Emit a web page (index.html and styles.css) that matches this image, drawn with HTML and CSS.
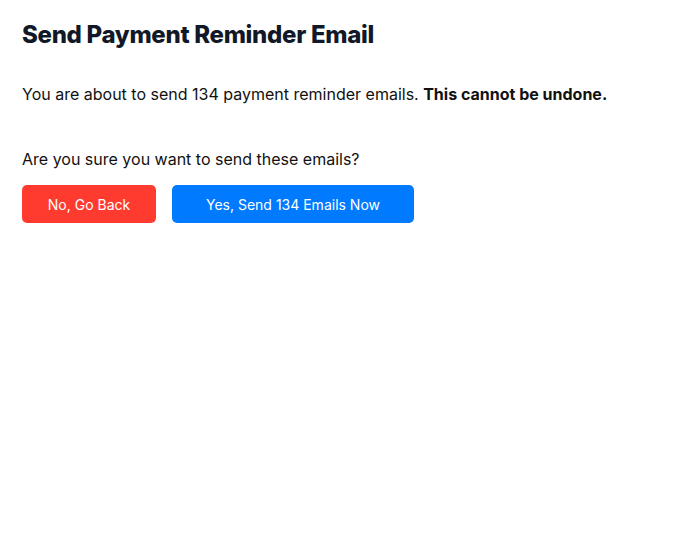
FILE: index.html
```html
<!DOCTYPE html>
<html>
<head>
<meta charset="utf-8">
<link rel="stylesheet" href="styles.css">
</head>
<body>
<main class="dialog">
  <h1 class="title">Send Payment Reminder Email</h1>
  <p class="message">You are about to send 134 payment reminder emails. <strong>This cannot be undone.</strong></p>
  <p class="question">Are you sure you want to send these emails?</p>
  <div class="actions">
    <button class="btn btn-cancel">No, Go Back</button>
    <button class="btn btn-confirm">Yes, Send 134 Emails Now</button>
  </div>
</main>
</body>
</html>
```

FILE: styles.css
```css
html, body {
  margin: 0;
  background: #ffffff;
}
body {
  font-family: Inter, "Noto Sans", sans-serif;
  color: #111111;
}
.dialog {
  padding: 19px 22px;
}
.title {
  margin: 0;
  font-size: 24px;
  line-height: 32px;
  font-weight: 800;
  letter-spacing: -0.3px;
  color: #111827;
}
.message {
  margin: 31px 0 0;
  font-size: 16px;
  line-height: 24px;
}
.message strong {
  font-weight: 700;
}
.question {
  margin: 41px 0 0;
  font-size: 16px;
  line-height: 24px;
}
.actions {
  display: flex;
  gap: 16px;
  margin-top: 14px;
}
.btn {
  font-family: Inter, "Noto Sans", sans-serif;
  font-size: 14px;
  border: none;
  border-radius: 5px;
  color: #ffffff;
  height: 38px;
  cursor: pointer;
}
.btn-cancel {
  background: #ff3b30;
  width: 134px;
}
.btn-confirm {
  background: #007aff;
  width: 242px;
}
```
